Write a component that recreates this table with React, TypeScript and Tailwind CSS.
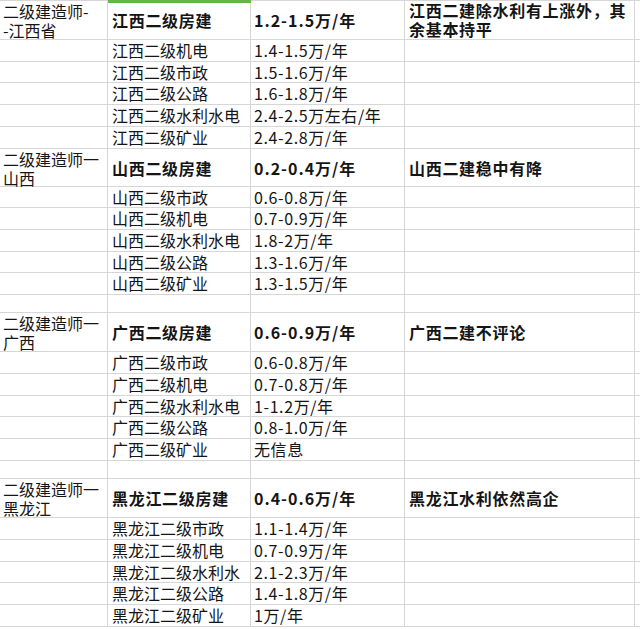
import React from 'react';

type Row = { name: string; price: string; h: string };
type Section = {
  title: [string, string];
  head: { name: string; price: string; note: React.ReactNode; h: string };
  rows: Row[];
  spacer?: boolean;
};

const SECTIONS: Section[] = [
  {
    title: ['二级建造师-', '-江西省'],
    head: {
      name: '江西二级房建',
      price: '1.2-1.5万/年',
      note: (
        <>
          江西二建除水利有上涨外，其
          <br />
          余基本持平
        </>
      ),
      h: 'h-[40px]',
    },
    rows: [
      { name: '江西二级机电', price: '1.4-1.5万/年', h: 'h-[22px]' },
      { name: '江西二级市政', price: '1.5-1.6万/年', h: 'h-[21px]' },
      { name: '江西二级公路', price: '1.6-1.8万/年', h: 'h-[22px]' },
      { name: '江西二级水利水电', price: '2.4-2.5万左右/年', h: 'h-[22px]' },
      { name: '江西二级矿业', price: '2.4-2.8万/年', h: 'h-[22px]' },
    ],
  },
  {
    title: ['二级建造师一', '山西'],
    head: { name: '山西二级房建', price: '0.2-0.4万/年', note: '山西二建稳中有降', h: 'h-[38px]' },
    rows: [
      { name: '山西二级市政', price: '0.6-0.8万/年', h: 'h-[21px]' },
      { name: '山西二级机电', price: '0.7-0.9万/年', h: 'h-[22px]' },
      { name: '山西二级水利水电', price: '1.8-2万/年', h: 'h-[22px]' },
      { name: '山西二级公路', price: '1.3-1.6万/年', h: 'h-[21px]' },
      { name: '山西二级矿业', price: '1.3-1.5万/年', h: 'h-[22px]' },
    ],
    spacer: true,
  },
  {
    title: ['二级建造师一', '广西'],
    head: { name: '广西二级房建', price: '0.6-0.9万/年', note: '广西二建不评论', h: 'h-[39px]' },
    rows: [
      { name: '广西二级市政', price: '0.6-0.8万/年', h: 'h-[22px]' },
      { name: '广西二级机电', price: '0.7-0.8万/年', h: 'h-[22px]' },
      { name: '广西二级水利水电', price: '1-1.2万/年', h: 'h-[21px]' },
      { name: '广西二级公路', price: '0.8-1.0万/年', h: 'h-[22px]' },
      { name: '广西二级矿业', price: '无信息', h: 'h-[22px]' },
    ],
    spacer: true,
  },
  {
    title: ['二级建造师一', '黑龙江'],
    head: { name: '黑龙江二级房建', price: '0.4-0.6万/年', note: '黑龙江水利依然高企', h: 'h-[39px]' },
    rows: [
      { name: '黑龙江二级市政', price: '1.1-1.4万/年', h: 'h-[22px]' },
      { name: '黑龙江二级机电', price: '0.7-0.9万/年', h: 'h-[22px]' },
      { name: '黑龙江二级水利水', price: '2.1-2.3万/年', h: 'h-[21px]' },
      { name: '黑龙江二级公路', price: '1.4-1.8万/年', h: 'h-[22px]' },
      { name: '黑龙江二级矿业', price: '1万/年', h: 'h-[22px]' },
    ],
  },
];

const rowCls = 'grid grid-cols-[108px_143px_154px_230px] border-b border-[#d6d6d6]';
const cell = 'border-r border-[#d6d6d6] whitespace-nowrap';

function PlainRow({ name = '', price = '', h }: { name?: string; price?: string; h: string }) {
  return (
    <div className={`${rowCls} ${h}`}>
      <div className={cell} />
      <div className={`${cell} flex items-center pl-[4px]`}>{name}</div>
      <div className={`${cell} flex items-center pl-[3px] tracking-[0.6px]`}>{price}</div>
      <div className={cell} />
    </div>
  );
}

export default function App() {
  return (
    <div
      className="w-[640px] h-[629px] bg-white text-[#151515] text-[16px] leading-[19px] overflow-hidden"
      style={{ fontFamily: '"Noto Sans CJK SC", "Noto Sans", sans-serif' }}
    >
      {SECTIONS.map((s, i) => (
        <React.Fragment key={i}>
          <div className={`${rowCls} ${s.head.h} ${i === 0 ? 'border-t border-t-[#d6d6d6]' : ''}`}>
            <div className={`${cell} pl-[3px] pt-[1px] leading-[18.5px]`}>
              {s.title[0]}
              <br />
              {s.title[1]}
            </div>
            <div className={`${cell} relative flex items-center pl-[4px] font-bold tracking-[0.7px]`}>
              {i === 0 && <span className="absolute left-0 right-[-1px] top-[-1px] h-[3px] bg-[#62b64a]" />}
              {s.head.name}
            </div>
            <div className={`${cell} flex items-center pl-[3px] font-bold tracking-[1px]`}>{s.head.price}</div>
            <div className={`${cell} flex items-center pl-[4px] font-bold tracking-[0.7px]`}>
              <div>{s.head.note}</div>
            </div>
          </div>
          {s.rows.map((r, j) => (
            <PlainRow key={j} name={r.name} price={r.price} h={r.h} />
          ))}
          {s.spacer && <PlainRow h="h-[18px]" />}
        </React.Fragment>
      ))}
    </div>
  );
}
